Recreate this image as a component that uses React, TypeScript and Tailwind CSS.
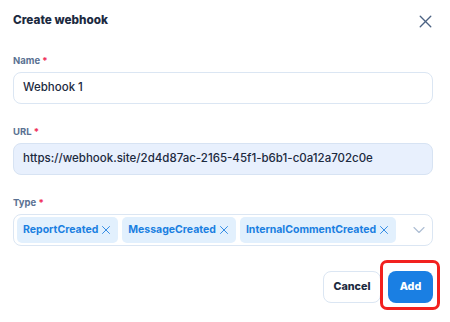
import { X, ChevronDown } from 'lucide-react';

const types = ['ReportCreated', 'MessageCreated', 'InternalCommentCreated'];

function Label({ text }: { text: string }) {
  return (
    <div className="mb-[5px] h-[12px] text-[9.5px] font-bold leading-[12px] text-[#5a7192]">
      {text} <span className="text-[#f0305a]">*</span>
    </div>
  );
}

export default function App() {
  return (
    <div
      className="h-[322px] w-[450px] bg-white pl-[13px] pr-[17px] pt-[12px]"
      style={{ fontFamily: 'Inter, "Noto Sans", sans-serif' }}
    >
      <div className="flex h-[18px] items-center justify-between">
        <h2 className="text-[11.75px] font-extrabold text-[#1c2a3f]">Create webhook</h2>
        <X className="-mr-[3px] h-[21px] w-[21px] text-[#4b6283]" strokeWidth={1.6} />
      </div>

      <div className="mt-[25px]">
        <Label text="Name" />
        <div className="flex h-[32px] items-center rounded-[8px] border border-[#dbe6f3] px-[9px] text-[11.5px] font-medium text-[#1c2a3f]">
          Webhook 1
        </div>
      </div>

      <div className="mt-[22px]">
        <Label text="URL" />
        <div className="flex h-[32px] items-center rounded-[8px] border border-[#d7e3f3] bg-[#e8f0fd] px-[9px] text-[11.5px] font-medium text-[#1c2a3f]">
          https://webhook.site/2d4d87ac-2165-45f1-b6b1-c0a12a702c0e
        </div>
      </div>

      <div className="mt-[22px]">
        <Label text="Type" />
        <div className="flex h-[32px] items-center rounded-[8px] border border-[#dbe6f3] pl-[3px] pr-[3px]">
          <div className="flex flex-1 gap-[4px]">
            {types.map((t) => (
              <span
                key={t}
                className="flex h-[26px] items-center rounded-[5px] bg-[#e2f0fd] pl-[6px] pr-[5px] text-[10.5px] font-bold text-[#1a7fe1]"
              >
                {t}
                <X className="ml-[1px] h-[14px] w-[14px]" strokeWidth={1.5} />
              </span>
            ))}
          </div>
          <ChevronDown className="h-[20px] w-[20px] text-[#aebfd4]" strokeWidth={1.4} />
        </div>
      </div>

      <div className="mt-[25px] flex items-center justify-end gap-[7px]">
        <button className="h-[32px] w-[58px] rounded-[8px] border border-[#dbe6f3] text-[10.75px] font-extrabold text-[#1c2a3f]">
          Cancel
        </button>
        <div className="relative">
          <button className="h-[32px] w-[45px] rounded-[8px] bg-[#1a7fe3] text-[10.75px] font-extrabold text-white">
            Add
          </button>
          <span className="absolute -bottom-[7px] -left-[8px] -right-[7px] -top-[11px] rounded-[7px] border-[3px] border-[#f2211f]" />
        </div>
      </div>
    </div>
  );
}
